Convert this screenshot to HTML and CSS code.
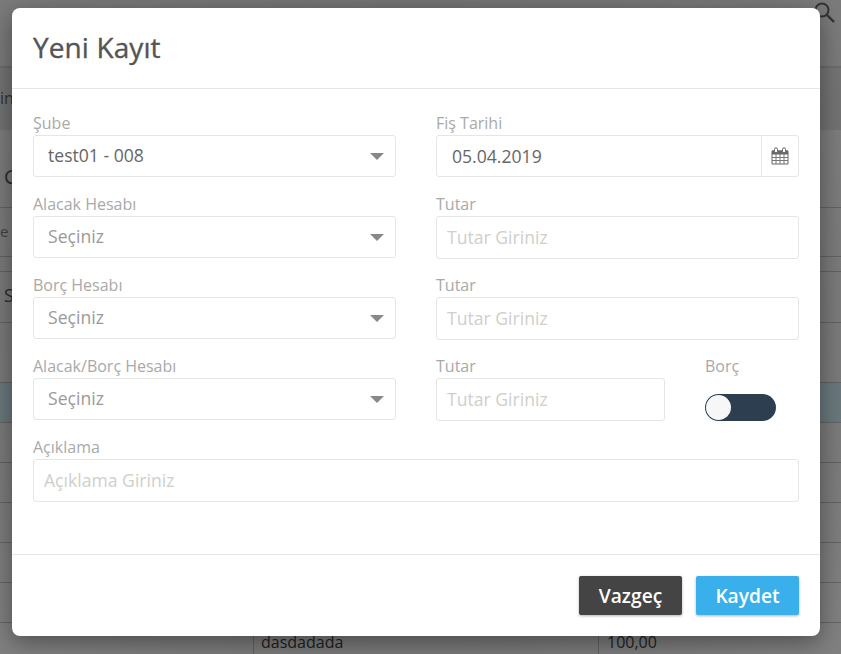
FILE: index.html
```html
<!DOCTYPE html>
<html lang="tr">
<head>
<meta charset="utf-8">
<title>Yeni Kayıt</title>
<link rel="stylesheet" href="styles.css">
</head>
<body>
<div class="page">
  <div class="topbar">
    <svg class="search" width="24" height="24" viewBox="0 0 24 24"><circle cx="9" cy="9" r="6.5" fill="none" stroke="#333" stroke-width="2"/><path d="M14 14l7 7" stroke="#333" stroke-width="2.4" fill="none"/></svg>
  </div>
  <div class="crumbs"><span class="crumb-text">in</span></div>
  <div class="heading"><span>G</span></div>
  <div class="filter"><span>e</span></div>
  <div class="gap"></div>
  <div class="section"><span>S</span></div>
  <div class="thead"></div>
  <div class="row selected"></div>
  <div class="row"></div>
  <div class="row"></div>
  <div class="row"></div>
  <div class="row"></div>
  <div class="row"></div>
  <div class="row cells"><span class="cell-a">dasdadada</span><span class="cell-b">100,00</span></div>
</div>
<div class="backdrop"></div>
<div class="modal">
  <header class="modal-head"><h1>Yeni Kayıt</h1></header>
  <form class="modal-body">
    <div class="form-row">
      <label class="field">
        <span class="label">Şube</span>
        <span class="control select value">test01 - 008<i class="caret"></i></span>
      </label>
      <label class="field">
        <span class="label">Fiş Tarihi</span>
        <span class="control date">
          <span class="date-value">05.04.2019</span>
          <span class="addon">
            <svg width="18" height="18" viewBox="0 0 18 18"><path d="M1 4h16v13H1z" fill="#fff" stroke="#666"/><path d="M1 3.5h16v4H1z" fill="#666"/><path d="M1 10.5h16M1 13.5h16M5 7v10M9 7v10M13 7v10" stroke="#777" stroke-width="1" fill="none"/><rect x="3.5" y="0.8" width="3" height="5" rx="1.5" fill="#fff" stroke="#666"/><rect x="11.5" y="0.8" width="3" height="5" rx="1.5" fill="#fff" stroke="#666"/></svg>
          </span>
        </span>
      </label>
    </div>
    <div class="form-row">
      <label class="field">
        <span class="label">Alacak Hesabı</span>
        <span class="control select">Seçiniz<i class="caret"></i></span>
      </label>
      <label class="field">
        <span class="label">Tutar</span>
        <span class="control input">Tutar Giriniz</span>
      </label>
    </div>
    <div class="form-row">
      <label class="field">
        <span class="label">Borç Hesabı</span>
        <span class="control select">Seçiniz<i class="caret"></i></span>
      </label>
      <label class="field">
        <span class="label">Tutar</span>
        <span class="control input">Tutar Giriniz</span>
      </label>
    </div>
    <div class="form-row">
      <label class="field">
        <span class="label">Alacak/Borç Hesabı</span>
        <span class="control select">Seçiniz<i class="caret"></i></span>
      </label>
      <div class="field split">
        <label class="field-amount">
          <span class="label">Tutar</span>
          <span class="control input">Tutar Giriniz</span>
        </label>
        <div class="field-toggle">
          <span class="label">Borç</span>
          <span class="toggle"><i class="knob"></i></span>
        </div>
      </div>
    </div>
    <label class="field wide">
      <span class="label">Açıklama</span>
      <span class="control input">Açıklama Giriniz</span>
    </label>
  </form>
  <footer class="modal-foot">
    <button type="button" class="btn btn-dark">Vazgeç</button>
    <button type="button" class="btn btn-blue">Kaydet</button>
  </footer>
</div>
</body>
</html>
```
FILE: styles.css
```css
* { box-sizing: border-box; }
html, body { margin: 0; height: 100%; overflow: hidden; }
body { font-family: "Open Sans", "Noto Sans", sans-serif; background: #7c7c7c; }

.page { width: 841px; height: 654px; overflow: hidden; color: #222; background: #808080; }
.topbar { height: 68px; background: #7b7b7b; border-bottom: 2px solid #6c6c6c; padding: 0 2px 0 0; display: flex; justify-content: flex-end; }
.search { margin-top: 1px; margin-right: 2px; }
.crumbs { height: 62px; background: #757575; font-size: 16px; padding-top: 19px; color: #333; }
.heading { height: 78px; font-size: 20px; padding-top: 33px; padding-left: 4px; border-bottom: 1px solid #666; background: #808080; color: #2c2c2c; }
.filter { height: 49px; border-bottom: 1px solid #666; font-size: 15px; padding-top: 13px; color: #444; }
.gap { height: 15px; border-bottom: 1px solid #666; }
.section { height: 51px; border-bottom: 1px solid #666; font-size: 18px; padding-top: 11px; padding-left: 4px; color: #2c2c2c; }
.thead { height: 60px; border-bottom: 1px solid #666; }
.row { height: 40px; border-bottom: 1px solid #666; }
.selected { background: #6f7d82; }
.cells { display: flex; font-size: 16px; color: #222; height: 32px; border-bottom: 0; }
.cell-a { width: 345px; margin-left: 253px; padding: 7px 0 0 7px; border-left: 1px solid #666; line-height: 24px; }
.cell-b { padding: 7px 0 0 8px; border-left: 1px solid #666; line-height: 24px; }

.backdrop { position: absolute; inset: 0; background: radial-gradient(ellipse 560px 440px at 416px 322px, rgba(0,0,0,.2), rgba(0,0,0,0) 100%); }

.modal { position: absolute; left: 12px; top: 8px; width: 808px; height: 628px; background: #fff; border-radius: 8px; box-shadow: 0 6px 24px rgba(0,0,0,.4); display: flex; flex-direction: column; }
.modal-head { height: 81px; border-bottom: 1px solid #e6e6e6; padding: 19px 21px 0; }
.modal-head h1 { margin: 0; font-size: 28px; line-height: 40px; font-weight: 500; color: #555; letter-spacing: 0.1px; -webkit-text-stroke: 0.35px #555; }

.modal-body { flex: 1; padding: 24px 21px 0; display: flex; flex-direction: column; }
.form-row { display: flex; gap: 40px; height: 81px; }
.field { display: flex; flex-direction: column; width: 363px; }
.wide { width: 766px; }
.split { flex-direction: row; gap: 40px; }
.field-amount { display: flex; flex-direction: column; width: 229px; }
.field-toggle { display: flex; flex-direction: column; }
.label { display: block; height: 22px; font-size: 16px; line-height: 20px; color: #a9a9a9; }
.control { display: flex; align-items: center; height: 42px; background: #fff; border: 1px solid #e5e5e5; border-radius: 3px; font-size: 17.6px; line-height: 24px; padding-bottom: 1px; }
.select { padding-left: 14px; padding-bottom: 3px; color: #999; position: relative; }
.value { color: #666; }
.caret { position: absolute; right: 11px; top: 17px; width: 0; height: 0; border-left: 7px solid transparent; border-right: 7px solid transparent; border-top: 7px solid #888; }
.input { height: 43px; padding-left: 10px; color: #cfcfca; }
.date { color: #666; padding: 0 0 0 0; }
.date-value { flex: 1; padding-left: 15px; }
.addon { width: 37px; height: 100%; border-left: 1px solid #e5e5e5; display: flex; align-items: center; justify-content: center; }

.toggle { display: block; width: 71px; height: 27px; margin-top: 16px; border-radius: 14px; background: #2d3e50; padding: 1px; }
.knob { display: block; width: 25px; height: 25px; border-radius: 50%; background: #f7f7f7; }

.modal-foot { height: 82px; border-top: 1px solid #e6e6e6; padding: 21px 21px 0; display: flex; justify-content: flex-end; gap: 14px; }
.btn { width: 103px; height: 39px; border: 0; border-radius: 2px; color: #fff; font-family: inherit; font-size: 19.2px; font-weight: 600; padding: 0; box-shadow: 0 1px 3px rgba(0,0,0,.3); }
.btn-dark { background: #444; }
.btn-blue { background: #39b0ec; }
```
